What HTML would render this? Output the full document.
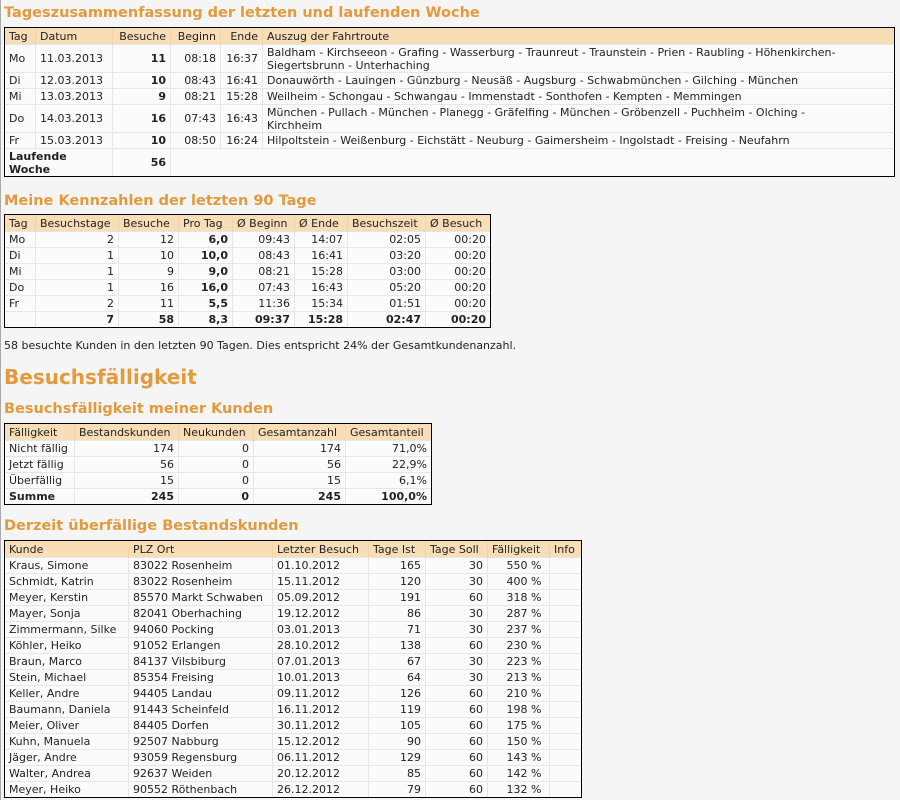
<!DOCTYPE html>
<html><head><meta charset="utf-8"><style>
html,body{margin:0;padding:0}
body{width:899px;height:800px;background:#f5f5f5;border-left:1px solid #aaa;font-family:"DejaVu Sans","Liberation Sans",Verdana,sans-serif;font-size:11px;color:#222;overflow:hidden;position:relative}
h2{font-size:14.5px;color:#e39a3c;margin:0;position:absolute;left:3px;font-weight:bold}
h1{font-size:20px;color:#e39a3c;margin:0;position:absolute;left:3px;font-weight:bold}
table{position:absolute;left:3px;border-collapse:collapse;border:1px solid #000;background:#fbfbfb;table-layout:fixed}
td,th{padding:0 4px;height:15px;line-height:13px;border-left:1px solid #e6e6e6;border-top:1px solid #e6e6e6;white-space:nowrap;vertical-align:middle;font-weight:normal}
th{background:#f8deb6;text-align:left;border-left-color:#f3d4a6;border-top:1px solid #000;height:16px}
td:first-child,th:first-child{border-left:1px solid #000}
td:last-child,th:last-child{border-right:1px solid #000}
tr:last-child td{border-bottom:1px solid #000}
.r{text-align:right}
.b,.b td{font-weight:bold}
.w{white-space:normal}
p{position:absolute;left:3px;margin:0;top:339px}
</style></head><body>
<h2 style="top:5px">Tageszusammenfassung der letzten und laufenden Woche</h2>
<table style="top:27px;width:891px">
<col style="width:31px"><col style="width:77px"><col style="width:58px"><col style="width:50px"><col style="width:42px"><col>
<tr><th>Tag</th><th>Datum</th><th class="r">Besuche</th><th class="r">Beginn</th><th class="r">Ende</th><th>Auszug der Fahrtroute</th></tr>
<tr style="height:28px"><td>Mo</td><td>11.03.2013</td><td class="r b">11</td><td class="r">08:18</td><td class="r">16:37</td><td class="w">Baldham - Kirchseeon - Grafing - Wasserburg - Traunreut - Traunstein - Prien - Raubling - Höhenkirchen-Siegertsbrunn - Unterhaching</td></tr>
<tr><td>Di</td><td>12.03.2013</td><td class="r b">10</td><td class="r">08:43</td><td class="r">16:41</td><td>Donauwörth - Lauingen - Günzburg - Neusäß - Augsburg - Schwabmünchen - Gilching - München</td></tr>
<tr><td>Mi</td><td>13.03.2013</td><td class="r b">9</td><td class="r">08:21</td><td class="r">15:28</td><td>Weilheim - Schongau - Schwangau - Immenstadt - Sonthofen - Kempten - Memmingen</td></tr>
<tr style="height:28px"><td>Do</td><td>14.03.2013</td><td class="r b">16</td><td class="r">07:43</td><td class="r">16:43</td><td class="w">München - Pullach - München - Planegg - Gräfelfing - München - Gröbenzell - Puchheim - Olching -<br>Kirchheim</td></tr>
<tr><td>Fr</td><td>15.03.2013</td><td class="r b">10</td><td class="r">08:50</td><td class="r">16:24</td><td>Hilpoltstein - Weißenburg - Eichstätt - Neuburg - Gaimersheim - Ingolstadt - Freising - Neufahrn</td></tr>
<tr style="height:28px"><td colspan="2" class="b w">Laufende<br>Woche</td><td class="r b">56</td><td colspan="3"></td></tr>
</table>
<h2 style="top:193px">Meine Kennzahlen der letzten 90 Tage</h2>
<table style="top:214px;width:487px">
<col style="width:31px"><col style="width:83px"><col style="width:60px"><col style="width:54px"><col style="width:62px"><col style="width:53px"><col style="width:78px"><col>
<tr><th>Tag</th><th>Besuchstage</th><th>Besuche</th><th>Pro Tag</th><th>Ø Beginn</th><th>Ø Ende</th><th>Besuchszeit</th><th>Ø Besuch</th></tr>
<tr><td>Mo</td><td class="r">2</td><td class="r">12</td><td class="r b">6,0</td><td class="r">09:43</td><td class="r">14:07</td><td class="r">02:05</td><td class="r">00:20</td></tr>
<tr><td>Di</td><td class="r">1</td><td class="r">10</td><td class="r b">10,0</td><td class="r">08:43</td><td class="r">16:41</td><td class="r">03:20</td><td class="r">00:20</td></tr>
<tr><td>Mi</td><td class="r">1</td><td class="r">9</td><td class="r b">9,0</td><td class="r">08:21</td><td class="r">15:28</td><td class="r">03:00</td><td class="r">00:20</td></tr>
<tr><td>Do</td><td class="r">1</td><td class="r">16</td><td class="r b">16,0</td><td class="r">07:43</td><td class="r">16:43</td><td class="r">05:20</td><td class="r">00:20</td></tr>
<tr><td>Fr</td><td class="r">2</td><td class="r">11</td><td class="r b">5,5</td><td class="r">11:36</td><td class="r">15:34</td><td class="r">01:51</td><td class="r">00:20</td></tr>
<tr class="b"><td></td><td class="r">7</td><td class="r">58</td><td class="r">8,3</td><td class="r">09:37</td><td class="r">15:28</td><td class="r">02:47</td><td class="r">00:20</td></tr>
</table>
<p>58 besuchte Kunden in den letzten 90 Tagen. Dies entspricht 24% der Gesamtkundenanzahl.</p>
<h1 style="top:365px">Besuchsfälligkeit</h1>
<h2 style="top:401px">Besuchsfälligkeit meiner Kunden</h2>
<table style="top:423px;width:428px">
<col style="width:70px"><col style="width:104px"><col style="width:75px"><col style="width:92px"><col>
<tr><th>Fälligkeit</th><th>Bestandskunden</th><th>Neukunden</th><th>Gesamtanzahl</th><th>Gesamtanteil</th></tr>
<tr><td>Nicht fällig</td><td class="r">174</td><td class="r">0</td><td class="r">174</td><td class="r">71,0%</td></tr>
<tr><td>Jetzt fällig</td><td class="r">56</td><td class="r">0</td><td class="r">56</td><td class="r">22,9%</td></tr>
<tr><td>Überfällig</td><td class="r">15</td><td class="r">0</td><td class="r">15</td><td class="r">6,1%</td></tr>
<tr class="b"><td>Summe</td><td class="r">245</td><td class="r">0</td><td class="r">245</td><td class="r">100,0%</td></tr>
</table>
<h2 style="top:518px">Derzeit überfällige Bestandskunden</h2>
<table style="top:540px;width:578px">
<col style="width:124px"><col style="width:144px"><col style="width:96px"><col style="width:57px"><col style="width:62px"><col style="width:62px"><col>
<tr><th>Kunde</th><th>PLZ Ort</th><th>Letzter Besuch</th><th>Tage Ist</th><th>Tage Soll</th><th>Fälligkeit</th><th>Info</th></tr>
<tr><td>Kraus, Simone</td><td>83022 Rosenheim</td><td>01.10.2012</td><td class="r">165</td><td class="r">30</td><td class="r">550 %&nbsp;</td><td></td></tr>
<tr><td>Schmidt, Katrin</td><td>83022 Rosenheim</td><td>15.11.2012</td><td class="r">120</td><td class="r">30</td><td class="r">400 %&nbsp;</td><td></td></tr>
<tr><td>Meyer, Kerstin</td><td>85570 Markt Schwaben</td><td>05.09.2012</td><td class="r">191</td><td class="r">60</td><td class="r">318 %&nbsp;</td><td></td></tr>
<tr><td>Mayer, Sonja</td><td>82041 Oberhaching</td><td>19.12.2012</td><td class="r">86</td><td class="r">30</td><td class="r">287 %&nbsp;</td><td></td></tr>
<tr><td>Zimmermann, Silke</td><td>94060 Pocking</td><td>03.01.2013</td><td class="r">71</td><td class="r">30</td><td class="r">237 %&nbsp;</td><td></td></tr>
<tr><td>Köhler, Heiko</td><td>91052 Erlangen</td><td>28.10.2012</td><td class="r">138</td><td class="r">60</td><td class="r">230 %&nbsp;</td><td></td></tr>
<tr><td>Braun, Marco</td><td>84137 Vilsbiburg</td><td>07.01.2013</td><td class="r">67</td><td class="r">30</td><td class="r">223 %&nbsp;</td><td></td></tr>
<tr><td>Stein, Michael</td><td>85354 Freising</td><td>10.01.2013</td><td class="r">64</td><td class="r">30</td><td class="r">213 %&nbsp;</td><td></td></tr>
<tr><td>Keller, Andre</td><td>94405 Landau</td><td>09.11.2012</td><td class="r">126</td><td class="r">60</td><td class="r">210 %&nbsp;</td><td></td></tr>
<tr><td>Baumann, Daniela</td><td>91443 Scheinfeld</td><td>16.11.2012</td><td class="r">119</td><td class="r">60</td><td class="r">198 %&nbsp;</td><td></td></tr>
<tr><td>Meier, Oliver</td><td>84405 Dorfen</td><td>30.11.2012</td><td class="r">105</td><td class="r">60</td><td class="r">175 %&nbsp;</td><td></td></tr>
<tr><td>Kuhn, Manuela</td><td>92507 Nabburg</td><td>15.12.2012</td><td class="r">90</td><td class="r">60</td><td class="r">150 %&nbsp;</td><td></td></tr>
<tr><td>Jäger, Andre</td><td>93059 Regensburg</td><td>06.11.2012</td><td class="r">129</td><td class="r">60</td><td class="r">143 %&nbsp;</td><td></td></tr>
<tr><td>Walter, Andrea</td><td>92637 Weiden</td><td>20.12.2012</td><td class="r">85</td><td class="r">60</td><td class="r">142 %&nbsp;</td><td></td></tr>
<tr><td>Meyer, Heiko</td><td>90552 Röthenbach</td><td>26.12.2012</td><td class="r">79</td><td class="r">60</td><td class="r">132 %&nbsp;</td><td></td></tr>
</table>
</body></html>
